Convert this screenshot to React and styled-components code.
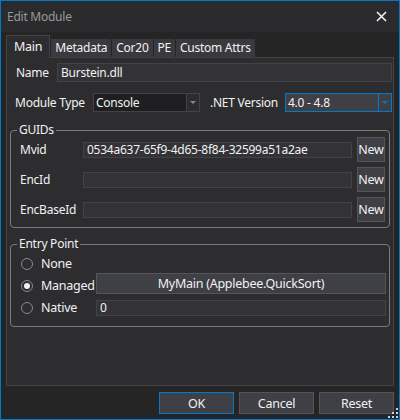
import React from "react";
import styled, { createGlobalStyle } from "styled-components";

const GlobalStyle = createGlobalStyle`
  html, body {
    margin: 0;
    padding: 0;
    background: #252526;
  }
  * {
    box-sizing: border-box;
  }
`;

const Window = styled.div`
  width: 400px;
  height: 420px;
  border: 1px solid #007acc;
  background: #252526;
  display: flex;
  flex-direction: column;
  font-family: "Noto Sans", "Open Sans", sans-serif;
  font-size: 12px;
  letter-spacing: -0.25px;
  color: #f1f1f1;
  overflow: hidden;
`;

const TitleBar = styled.div`
  height: 31px;
  background: #2b2b2e;
  display: flex;
  align-items: center;
  justify-content: space-between;
  padding: 0 12px 0 6px;
  color: #999999;
`;

const Body = styled.div`
  flex: 1;
  display: flex;
  flex-direction: column;
  padding: 3px 5px 5px 5px;
`;

const TabStrip = styled.div`
  height: 22px;
  display: flex;
  align-items: flex-end;
  gap: 1px;
`;

const Tab = styled.div`
  height: ${(p) => (p.$active ? "23px" : "18px")};
  line-height: ${(p) => (p.$active ? "21px" : "18px")};
  padding: 0 ${(p) => (p.$active ? "7px" : "4px")};
  background: ${(p) => (p.$active ? "#2d2d30" : "#3a3a3e")};
  border: ${(p) => (p.$active ? "1px solid #434346" : "none")};
  border-bottom: none;
  margin-bottom: ${(p) => (p.$active ? "-1px" : "0")};
  position: relative;
  z-index: ${(p) => (p.$active ? 1 : 0)};
  font-size: ${(p) => (p.$active ? "12.5px" : "12px")};
`;

const Panel = styled.div`
  flex: 1;
  background: #2d2d30;
  border: 1px solid #434346;
  display: flex;
  flex-direction: column;
  padding: 5px 1px 0 1px;
`;

const Row = styled.div`
  display: flex;
  align-items: center;
  margin: ${(p) => p.$margin || "0"};
`;

const Label = styled.div`
  width: ${(p) => p.$width || "auto"};
  padding-left: ${(p) => p.$indent || "0"};
  flex-shrink: 0;
  white-space: nowrap;
`;

const TextBox = styled.div`
  flex: 1;
  height: ${(p) => p.$height || "16px"};
  line-height: ${(p) => (p.$height ? `calc(${p.$height} - 2px)` : "14px")};
  background: #333337;
  border: 1px solid #434346;
  padding: 0 3px;
  white-space: nowrap;
  overflow: hidden;
`;

const Combo = styled.div`
  width: 107px;
  height: 19px;
  display: flex;
  border: 1px solid ${(p) => (p.$focused ? "#007acc" : "#434346")};
  background: ${(p) => (p.$focused ? "#3f3f46" : "#1f1f21")};
`;

const ComboText = styled.div`
  flex: 1;
  line-height: 17px;
  padding-left: 2px;
  white-space: nowrap;
`;

const ComboButton = styled.div`
  width: 13px;
  border-left: 1px solid ${(p) => (p.$focused ? "#007acc" : "#434346")};
  background: ${(p) => (p.$focused ? "#3f3f46" : "#2d2d30")};
  display: flex;
  align-items: center;
  justify-content: center;
`;

const Arrow = styled.div`
  width: 0;
  height: 0;
  border-left: 3px solid transparent;
  border-right: 3px solid transparent;
  border-top: 3px solid ${(p) => (p.$focused ? "#007acc" : "#8a8a8a")};
`;

const Group = styled.fieldset`
  margin: ${(p) => p.$margin || "0"};
  padding: 0;
  border: 1.5px solid #7c7c7f;
  border-radius: 4px;
  min-width: 0;
`;

const Legend = styled.legend`
  margin-left: 6px;
  padding: 0 2px;
  line-height: 14px;
`;

const GroupBody = styled.div`
  display: flex;
  flex-direction: column;
  gap: ${(p) => p.$gap || "0"};
  padding: ${(p) => p.$padding || "0"};
`;

const Button = styled.div`
  width: ${(p) => p.$width || "75px"};
  height: ${(p) => p.$height || "22px"};
  flex: ${(p) => (p.$grow ? 1 : "none")};
  margin-left: ${(p) => p.$gapLeft || "0"};
  background: #3f3f46;
  border: 1px solid ${(p) => (p.$default ? "#007acc" : "#555558")};
  display: flex;
  align-items: center;
  justify-content: center;
  white-space: nowrap;
  font-size: ${(p) => p.$size || "12px"};
`;

const Radio = styled.div`
  width: 12px;
  height: 12px;
  border-radius: 50%;
  border: 1px solid #8a8a8a;
  background: #2d2d30;
  display: flex;
  align-items: center;
  justify-content: center;
  margin-right: 8px;
  flex-shrink: 0;

  &::after {
    content: "";
    display: ${(p) => (p.$checked ? "block" : "none")};
    width: 6px;
    height: 6px;
    border-radius: 50%;
    background: #f1f1f1;
  }
`;

const RadioLabel = styled.div`
  width: 75px;
  height: ${(p) => p.$height || "auto"};
  display: flex;
  align-items: center;
  flex-shrink: 0;
  font-size: 12.5px;
  padding-top: ${(p) => p.$shift || "0"};
`;

const Footer = styled.div`
  display: flex;
  justify-content: flex-end;
  gap: 5px;
  margin-top: 6px;
`;

const Grip = styled.svg`
  position: absolute;
  right: 2px;
  bottom: 2px;
`;

const Shell = styled.div`
  position: relative;
  width: 400px;
  height: 420px;
`;

const CloseIcon = () => (
  <svg width="11" height="11" viewBox="0 0 11 11">
    <path d="M1 1 L10 10 M10 1 L1 10" stroke="#f1f1f1" strokeWidth="1.6" />
  </svg>
);

const guids = [
  { name: "Mvid", value: "0534a637-65f9-4d65-8f84-32599a51a2ae" },
  { name: "EncId", value: "" },
  { name: "EncBaseId", value: "" },
];

const tabs = ["Main", "Metadata", "Cor20", "PE", "Custom Attrs"];

const gripDots = [
  [8, 0],
  [4, 4],
  [8, 4],
  [0, 8],
  [4, 8],
  [8, 8],
];

export default function App() {
  return (
    <Shell>
      <GlobalStyle />
      <Window>
        <TitleBar>
          <span>Edit Module</span>
          <CloseIcon />
        </TitleBar>
        <Body>
          <TabStrip>
            {tabs.map((t, i) => (
              <Tab key={t} $active={i === 0}>
                {t}
              </Tab>
            ))}
          </TabStrip>
          <Panel>
            <Row>
              <Label $width="49px" $indent="8px">Name</Label>
              <TextBox $height="19px">Burstein.dll</TextBox>
            </Row>
            <Row $margin="11px 0 0 0">
              <Label $width="85px" $indent="7px">Module Type</Label>
              <Combo>
                <ComboText>Console</ComboText>
                <ComboButton>
                  <Arrow />
                </ComboButton>
              </Combo>
              <Label $width="85px" $indent="10px">.NET Version</Label>
              <Combo $focused>
                <ComboText>4.0 - 4.8</ComboText>
                <ComboButton $focused>
                  <Arrow $focused />
                </ComboButton>
              </Combo>
            </Row>

            <Group $margin="11px 2px 0 2px">
              <Legend>GUIDs</Legend>
              <GroupBody $gap="5px" $padding="0 4px 5px 9px">
                {guids.map((g) => (
                  <Row key={g.name}>
                    <Label $width="63px">{g.name}</Label>
                    <TextBox>{g.value}</TextBox>
                    <Button $width="28px" $height="25px" $gapLeft="5px" $size="12.5px">
                      New
                    </Button>
                  </Row>
                ))}
              </GroupBody>
            </Group>

            <Group $margin="9px 2px 0 2px">
              <Legend>Entry Point</Legend>
              <GroupBody $padding="3px 3px 10px 10px">
                <Row>
                  <RadioLabel $height="19px">
                    <Radio />
                    None
                  </RadioLabel>
                </Row>
                <Row>
                  <RadioLabel $shift="4px">
                    <Radio $checked />
                    Managed
                  </RadioLabel>
                  <Button $grow $height="21px" $size="12.5px">
                    MyMain (Applebee.QuickSort)
                  </Button>
                </Row>
                <Row $margin="5px 0 0 0">
                  <RadioLabel>
                    <Radio />
                    Native
                  </RadioLabel>
                  <TextBox>0</TextBox>
                </Row>
              </GroupBody>
            </Group>
          </Panel>
          <Footer>
            <Button $default $size="12.5px">OK</Button>
            <Button $size="12.5px">Cancel</Button>
            <Button $size="12.5px">Reset</Button>
          </Footer>
        </Body>
      </Window>
      <Grip width="10" height="10" viewBox="0 0 10 10">
        {gripDots.map(([x, y]) => (
          <rect key={`${x}-${y}`} x={x} y={y} width="2" height="2" fill="#cfcfcf" />
        ))}
      </Grip>
    </Shell>
  );
}
